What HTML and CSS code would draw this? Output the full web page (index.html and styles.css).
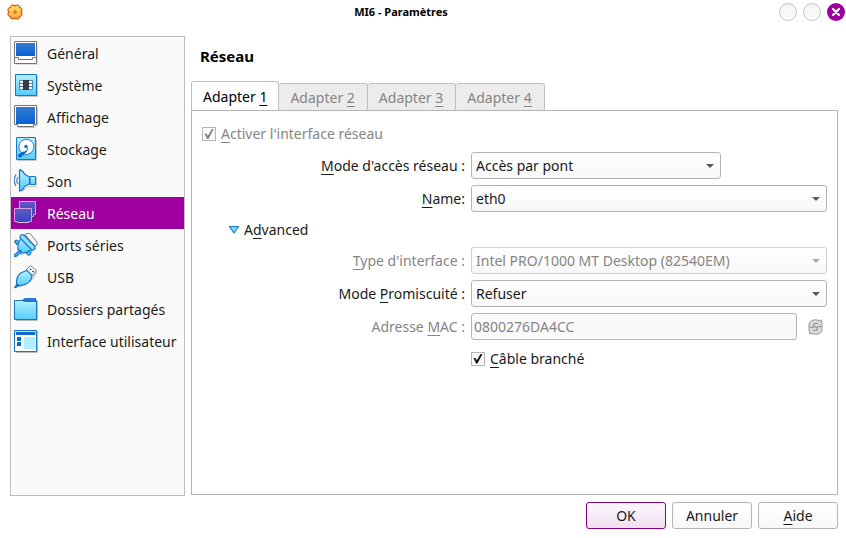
FILE: index.html
```html
<!DOCTYPE html>
<html lang="fr">
<head>
<meta charset="utf-8">
<meta name="viewport" content="width=device-width, initial-scale=1">
<title>MI6 - Paramètres</title>
<link rel="stylesheet" href="styles.css">
</head>
<body>
<svg class="defs" aria-hidden="true">
  <defs>
    <linearGradient id="cyan" x1="0" y1="0" x2="0" y2="1"><stop offset="0" stop-color="#b4f0ff"/><stop offset="1" stop-color="#55cdfb"/></linearGradient>
    <linearGradient id="screen" x1="0" y1="0" x2="0" y2="1"><stop offset="0" stop-color="#3679ce"/><stop offset="1" stop-color="#0562d6"/></linearGradient>
    <linearGradient id="violet" x1="0" y1="0" x2="0" y2="1"><stop offset="0" stop-color="#6258c4"/><stop offset="1" stop-color="#3448c4"/></linearGradient>
    <linearGradient id="gold" x1="0" y1="0" x2="0" y2="1"><stop offset="0" stop-color="#ffe36a"/><stop offset="1" stop-color="#fba93a"/></linearGradient>
  </defs>
</svg>

<header class="titlebar">
  <svg class="app-icon" viewBox="0 0 16 16" aria-hidden="true">
    <path d="M5 1.200Q6.800.600 8 2Q9.200.600 11 1.200Q12.600 1.800 12.500 3.500Q14.400 3.500 14.900 5.200Q15.400 7 13.900 8Q15.400 9.200 14.900 10.900Q14.300 12.500 12.500 12.500Q12.600 14.200 11 14.800Q9.200 15.300 8 14Q6.800 15.300 5 14.800Q3.400 14.200 3.500 12.500Q1.700 12.500 1.100 10.900Q.600 9.200 2.100 8Q.600 7 1.100 5.200Q1.600 3.500 3.500 3.500Q3.400 1.800 5 1.200Z" fill="url(#gold)" stroke="#dc5a18" stroke-width="1.200"/>
    <circle cx="8" cy="8" r="1.300" fill="#f4a34d" stroke="#cf641b"/>
  </svg>
  <h1>MI6 - Paramètres</h1>
  <div class="window-controls">
    <button type="button" aria-label="Réduire"></button>
    <button type="button" aria-label="Agrandir"></button>
    <button type="button" class="close" aria-label="Fermer"><svg viewBox="0 0 18 18"><path d="M6 6l6 6M12 6l-6 6" stroke="#fff" stroke-width="2.2" stroke-linecap="round"/></svg></button>
  </div>
</header>

<div class="workspace">
  <nav class="sidebar">
    <a href="#general"><svg viewBox="0 0 24 24"><path d="M2 24H24V2" fill="none" stroke="#c6c6c6"/><path d="M.5.5h22v22H.5z" fill="#fff" stroke="#747474"/><path d="M2 2h19v13H2z" fill="url(#screen)"/><path d="M.5 16.5h4v2h14v-2h4" fill="none" stroke="#747474"/></svg><span>Général</span></a>
    <a href="#systeme"><svg viewBox="0 0 24 24"><path d="M3 23.5H23.5V3" fill="none" stroke="#c6c6c6"/><path d="M1.5 1.5h21v21h-21z" fill="url(#cyan)" stroke="#1976c5"/><path d="M5.500 7.500h13v9h-13z" fill="#fff" stroke="#4c8daf"/><path d="M5 10.500h14M5 13.500h14" stroke="#497d96"/><path d="M9 7h6v10H9z" fill="#38394b"/></svg><span>Système</span></a>
    <a href="#affichage"><svg viewBox="0 0 24 24"><path d="M4 22.500H21V20.500H23.500V2" fill="none" stroke="#c6c6c6"/><path d="M.5.5h22v19h-3v2h-16v-2h-3z" fill="#fff" stroke="#747474"/><path d="M2 2h19v17H2z" fill="url(#screen)"/></svg><span>Affichage</span></a>
    <a href="#stockage"><svg viewBox="0 0 24 24"><path d="M3 23.5h19.5V3" fill="none" stroke="#c6c6c6"/><path d="M2.5.5h19v22h-19z" fill="url(#cyan)" stroke="#1976c5"/><path d="M7.500 15.500A7.500 7.500 0 1 1 14.500 17L10 18z" fill="#fff" stroke="#347dc1"/><circle cx="12" cy="9.500" r="1.700" fill="#0a63c4"/><path d="M12.500 14.500L6.500 20Q4 20.500 4.500 18L8 15.500z" fill="#0a63c4" stroke="#0a63c4"/><path d="M12 15l2-4" stroke="#0a63c4"/></svg><span>Stockage</span></a>
    <a href="#son"><svg viewBox="0 0 24 24"><path d="M7 23.500l7-6h8.500V8" fill="none" stroke="#c6c6c6"/><path d="M16 7.500h5.500v8H16z" fill="url(#cyan)" stroke="#1976c5"/><path d="M5.500.800Q9 1.500 10.500 5l5 3v7l-5 2.500Q9 21.500 5.500 22z" fill="url(#cyan)" stroke="#1976c5" stroke-width="1.200"/><path d="M4 8q-2.500 3.500 0 7M2 5.500q-3.500 6 0 11.500" fill="none" stroke="#3985ca" stroke-width="1.200"/></svg><span>Son</span></a>
    <a href="#reseau" class="current" aria-current="page"><svg viewBox="0 0 24 24"><path d="M9 17.500h12v-3h2.500V2M5 23h13" fill="none" stroke="#702077"/><path d="M5.500.500h16v13h-2v2h-12v-2h-2z" fill="url(#violet)" stroke="#dd9fdf"/><path d="M.500 7.500h17v13h-3v1h-11v-1h-3z" fill="url(#violet)" stroke="#dd9fdf"/><path d="M4 21.500h10" stroke="#eab9e7"/></svg><span>Réseau</span></a>
    <a href="#ports"><svg viewBox="0 0 24 24"><path d="M11 2l2-1.500h3l7 8.500v3l-2 1z" fill="#fff" stroke="#777"/><path d="M6 22l6-1.500h4l5-5" fill="none" stroke="#bbb"/><path d="M4 10l5-7 12 12-7 4-7 1-3-3z" fill="url(#cyan)" stroke="#1976c5" stroke-width="1.200"/><path d="M.800 9Q1 6.500 3.500 7.500L5 9l-2 2.500zM12.500 20l2-2 2.500 1.500q-.500 3-3 2.500z" fill="#62cbf8" stroke="#1976c5" stroke-width="1.200"/><path d="M6 3Q8 .500 10.500 2.500L20 12.500q2 1.500 0 4l-2 .500L6 5z" fill="#8be0ff" stroke="#1976c5" stroke-width="1.200"/><path d="M1.500 22.500L6 18.500" stroke="#1976c5" stroke-width="3.500" stroke-linecap="round"/><path d="M1.500 22.500L6 18.500" stroke="#75d6fc"/></svg><span>Ports séries</span></a>
    <a href="#usb"><svg viewBox="0 0 24 24"><path d="M5 22l6-2.500 7-5 5-8" fill="none" stroke="#ccc" stroke-width="1.500"/><path d="M12 5l4.500-4.500 6 5L18 11z" fill="#fff" stroke="#777"/><path d="M16 4l1 1M18.500 6l1 1" stroke="#333" stroke-width="1.600"/><path d="M2.500 20Q1.500 9 10 6.500l3-1 5 5-1 4Q14 20 4 21z" fill="url(#cyan)" stroke="#1976c5" stroke-width="1.200"/><path d="M1.500 22L4 20" stroke="#1976c5" stroke-width="2.500" stroke-linecap="round"/></svg><span>USB</span></a>
    <a href="#dossiers"><svg viewBox="0 0 24 24"><path d="M2 23.500h21.500V4" fill="none" stroke="#bbb"/><path d="M8 5V3l3-2h11v2h1v3H8z" fill="#2879cc"/><path d="M.500 3.500h8l2 1h12v18H.500z" fill="url(#cyan)" stroke="#1976c5"/></svg><span>Dossiers partagés</span></a>
    <a href="#interface"><svg viewBox="0 0 24 24"><path d="M2 23.500h21.500V2" fill="none" stroke="#bbb"/><path d="M.500 1.500h22v21H.500z" fill="#fff" stroke="#1976c5"/><path d="M1 2h21v4H1z" fill="#a5eaff"/><path d="M2 3h19v3H2zM3 8h4v4H3zM3 13h4v4H3z" fill="#1269c7"/><path d="M10 8h11v12H10z" fill="#aeeeff"/></svg><span>Interface utilisateur</span></a>
  </nav>

  <main class="page">
    <h2>Réseau</h2>
    <div class="tabs" role="tablist">
      <button type="button" role="tab" aria-selected="true">Adapter <u>1</u></button>
      <button type="button" role="tab" aria-selected="false" disabled>Adapter <u>2</u></button>
      <button type="button" role="tab" aria-selected="false" disabled>Adapter <u>3</u></button>
      <button type="button" role="tab" aria-selected="false" disabled>Adapter <u>4</u></button>
    </div>
    <form class="pane" id="settings">
      <div class="check muted">
        <input type="checkbox" id="enable" checked disabled>
        <label for="enable"><u>A</u>ctiver l'interface réseau</label>
      </div>
      <div class="fields">
        <label for="mode"><u>M</u>ode d'accès réseau :</label>
        <div class="select short"><select id="mode"><option>Accès par pont</option></select></div>

        <label for="name"><u>N</u>ame:</label>
        <div class="select"><select id="name"><option>eth0</option></select></div>

        <button type="button" class="expander" aria-expanded="true"><svg viewBox="0 0 12 10" aria-hidden="true"><path d="M1.500 1.500h9L6 8z" fill="#7be0ff" stroke="#1976c5" stroke-width="1.200" stroke-linejoin="round"/></svg><span>A<u>d</u>vanced</span></button>

        <label for="type" class="muted"><u>T</u>ype d'interface :</label>
        <div class="select muted"><select id="type" disabled><option>Intel PRO/1000 MT Desktop (82540EM)</option></select></div>

        <label for="promiscuous">Mode <u>P</u>romiscuité :</label>
        <div class="select"><select id="promiscuous"><option>Refuser</option></select></div>

        <label for="mac" class="muted">Adresse <u>M</u>AC :</label>
        <div class="mac">
          <input type="text" id="mac" value="0800276DA4CC" disabled>
          <button type="button" aria-label="Générer une adresse MAC" disabled><svg viewBox="0 0 16 16"><path d="M4 1.500Q8 0 12 1.500L14 1l.500 5v6Q12 16 7 15l-5-.500-.500-5V5Q2 3 4 1.500z" fill="#d8d8d8" stroke="#9a9a9a" stroke-linejoin="round"/><path d="M1.500 8.500h4M10.500 7.500h4M10.500 4.500H7L5.500 7.500 10 8.500 9 11.500H5.500" fill="none" stroke="#969696" stroke-width="1.200"/></svg></button>
        </div>

        <div class="check cable">
          <input type="checkbox" id="cable" checked>
          <label for="cable"><u>C</u>âble branché</label>
        </div>
      </div>
    </form>
  </main>
</div>

<footer class="actions">
  <button type="submit" form="settings" class="primary">OK</button>
  <button type="button">Annuler</button>
  <button type="button"><u>A</u>ide</button>
</footer>
</body>
</html>
```
FILE: styles.css
```css
* { box-sizing: border-box; }

body {
  display: flex;
  flex-direction: column;
  min-height: 100vh;
  margin: 0;
  background: #fff;
  color: #1a1a1a;
  font: 14px/20px "Noto Sans", sans-serif;
}

button, input, select { font: inherit; color: inherit; }
button { margin: 0; padding: 0; }
svg { display: block; flex: none; }
.defs { position: absolute; width: 0; height: 0; }
.muted { color: #858585; }

u {
  text-decoration-thickness: 1px;
  text-underline-offset: 3px;
  text-decoration-skip-ink: none;
}

.titlebar {
  display: flex;
  align-items: center;
  height: 24px;
  padding: 0 1px 0 7px;
}
.titlebar h1 {
  flex: 1;
  margin: 0;
  color: #000;
  font-size: 11px;
  line-height: 16px;
  text-align: center;
}
.app-icon { width: 16px; height: 16px; }
.window-controls { display: flex; gap: 6px; }
.window-controls button {
  width: 18px;
  height: 18px;
  border: 1px solid #c3c3c3;
  border-radius: 50%;
  background: linear-gradient(#f4f4f4, #fcfcfc);
}
.window-controls .close { border: 0; background: #a000a0; }

.workspace {
  display: flex;
  flex: 1;
  gap: 6px;
  padding: 12px 8px 0 10px;
}

.sidebar {
  flex: none;
  width: 175px;
  border: 1px solid #bcbcbc;
  background: #fafafa;
}
.sidebar a {
  display: flex;
  align-items: center;
  gap: 9px;
  height: 32px;
  padding-left: 3px;
  color: inherit;
  text-decoration: none;
  white-space: nowrap;
}
.sidebar svg { width: 24px; height: 24px; }
.sidebar span { padding-top: 2px; }
.sidebar .current { background: #a000a0; color: #fff; }

.page { display: flex; flex: 1; flex-direction: column; min-width: 0; }
.page h2 {
  margin: 10px 9px 15px;
  color: #000;
  font-size: 15px;
  line-height: 20px;
}

.tabs { display: flex; align-items: flex-end; margin-bottom: -1px; }
.tabs button {
  height: 28px;
  padding: 2px 12px 0 11px;
  border: 1px solid #c0c0c0;
  border-left-width: 0;
  border-radius: 3px 3px 0 0;
  border-bottom-color: #b4b4b4;
  background: #ececec;
  color: #858585;
}
.tabs [aria-selected="true"] {
  height: 30px;
  padding-right: 11px;
  border-left-width: 1px;
  border-bottom-color: #fff;
  background: #fff;
  color: #000;
}

.pane { flex: 1; padding: 13px 10px; border: 1px solid #b4b4b4; margin-bottom: 1px; }

.check { display: flex; align-items: center; gap: 5px; }
.check input {
  display: grid;
  place-items: center;
  appearance: none;
  width: 14px;
  height: 14px;
  margin: 0;
  border: 1px solid #b4b4b4;
  background: #fafafa;
}
.check input:checked::before {
  content: "";
  width: 10px;
  height: 10px;
  background: currentColor;
  clip-path: polygon(5% 45%, 25% 45%, 38% 68%, 78% 0, 98% 0, 45% 100%, 30% 100%);
}

.fields {
  display: grid;
  grid-template-columns: 263px 1fr;
  gap: 6px;
  align-items: center;
  margin-top: 8px;
}
.fields > label { text-align: right; }
.select { position: relative; }
.select.short { max-width: 250px; }
.select select, .mac input {
  display: block;
  width: 100%;
  height: 27px;
  border: 1px solid #b4b4b4;
  border-radius: 3px;
  outline: 0;
  opacity: 1;
}
.select select {
  appearance: none;
  padding: 0 24px 0 4px;
  background: linear-gradient(#fff, #f8f8f8);
}
.select.muted select { border-color: #d0d0d0; }
.select::after {
  content: "";
  position: absolute;
  top: 12px;
  right: 7px;
  width: 8px;
  height: 4px;
  background: #555;
  clip-path: polygon(0 0, 100% 0, 50% 100%);
  pointer-events: none;
}
.select.muted::after { background: #aaa; }

.expander {
  display: flex;
  grid-column: 1 / -1;
  align-items: center;
  justify-self: start;
  gap: 4px;
  height: 23px;
  margin-left: 26px;
  border: 0;
  background: none;
}
.expander svg { width: 12px; height: 10px; }

.mac { display: flex; align-items: center; gap: 10px; padding-right: 3px; }
.mac input {
  flex: 1;
  min-width: 0;
  padding: 0 2px;
  background: #fafafa;
  color: #858585;
}
.mac button { width: 17px; border: 0; background: none; }
.mac svg { width: 17px; height: 16px; }
.cable { grid-column: 2; height: 25px; }

.actions {
  display: flex;
  justify-content: flex-end;
  gap: 6px;
  padding: 6px 8px 9px;
}
.actions button {
  width: 80px;
  height: 27px;
  border: 1px solid #b4b4b4;
  border-radius: 3px;
  background: linear-gradient(#fff, #f8f8f8);
}
.actions .primary {
  border-color: #850085;
  background: linear-gradient(#fdf9fd, #f0dff0);
}
```
